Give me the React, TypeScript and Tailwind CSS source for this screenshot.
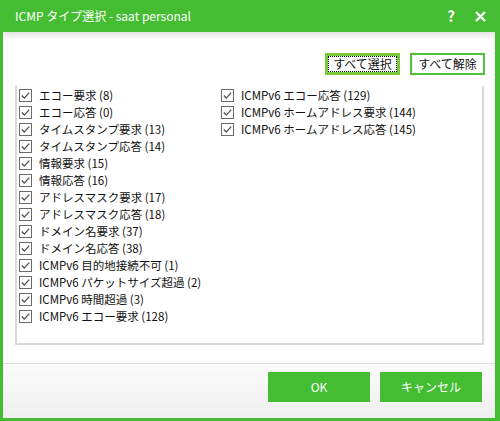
import React from 'react'

const left = [
  'エコー要求 (8)',
  'エコー応答 (0)',
  'タイムスタンプ要求 (13)',
  'タイムスタンプ応答 (14)',
  '情報要求 (15)',
  '情報応答 (16)',
  'アドレスマスク要求 (17)',
  'アドレスマスク応答 (18)',
  'ドメイン名要求 (37)',
  'ドメイン名応答 (38)',
  'ICMPv6 目的地接続不可 (1)',
  'ICMPv6 パケットサイズ超過 (2)',
  'ICMPv6 時間超過 (3)',
  'ICMPv6 エコー要求 (128)',
]

const right = [
  'ICMPv6 エコー応答 (129)',
  'ICMPv6 ホームアドレス要求 (144)',
  'ICMPv6 ホームアドレス応答 (145)',
]

const CheckItem = ({ label }: { label: string }) => (
  <div className="flex items-center h-[17px] gap-[7px]">
    <svg width="13" height="13" viewBox="0 0 13 13" className="shrink-0">
      <rect x="0.5" y="0.5" width="12" height="12" fill="#fff" stroke="#6a6a6a" />
      <path d="M2.8 6.6 L5.3 9.1 L10.2 3.6" fill="none" stroke="#555" strokeWidth="1.4" />
    </svg>
    <span className="whitespace-nowrap">{label}</span>
  </div>
)

export default function App() {
  return (
    <div
      className="w-[500px] h-[421px] bg-[#44bd32] flex flex-col text-[11.5px] text-[#111]"
      style={{ fontFamily: '"Noto Sans CJK JP", "Noto Sans", sans-serif' }}
    >
      <div className="h-[32px] flex items-center pl-[15px] pr-[14px] text-white">
        <span className="text-[12px] flex-1">ICMP タイプ選択 - saat personal</span>
        <span className="text-[15px] font-bold mr-[20px]">?</span>
        <svg width="11" height="11" viewBox="0 0 11 11">
          <path d="M1 1 L10 10 M10 1 L1 10" stroke="#fff" strokeWidth="2.4" />
        </svg>
      </div>

      <div className="flex-1 ml-[3px] mr-[5px] mb-[3px] flex flex-col bg-[linear-gradient(to_bottom,#e4e4e4,#ffffff_8px)]">
        <div className="flex justify-end gap-[10px] pt-[21px] pr-[10px]">
          <button className="w-[75px] h-[22px] border-[3px] border-[#7bc93a] flex items-center justify-center bg-white">
            <span className="w-full h-full flex items-center justify-center outline-1 outline-dotted outline-black -outline-offset-1 text-[12px]">
              すべて選択
            </span>
          </button>
          <button className="w-[75px] h-[22px] border-2 border-[#52c13a] flex items-center justify-center bg-white text-[12px]">
            すべて解除
          </button>
        </div>

        <div className="mt-[11px] mb-[18px] ml-[12px] mr-[11px] h-[259px] border-2 border-t-0 border-[#d9d9d9] grid grid-cols-[204px_1fr] pt-[1px]">
          <div className="pl-[2px]">
            {left.map((l) => (
              <CheckItem key={l} label={l} />
            ))}
          </div>
          <div>
            {right.map((l) => (
              <CheckItem key={l} label={l} />
            ))}
          </div>
        </div>

        <div className="h-[55px] border-t border-[#dcdcdc] bg-[linear-gradient(to_bottom,#fbfbfb,#efefef)] flex justify-end gap-[10px] pt-[8px] pr-[13px]">
          <button className="w-[102px] h-[30px] bg-[#44bd32] text-white text-[12px]">OK</button>
          <button className="w-[102px] h-[30px] bg-[#44bd32] text-white text-[12px]">キャンセル</button>
        </div>
      </div>
    </div>
  )
}
